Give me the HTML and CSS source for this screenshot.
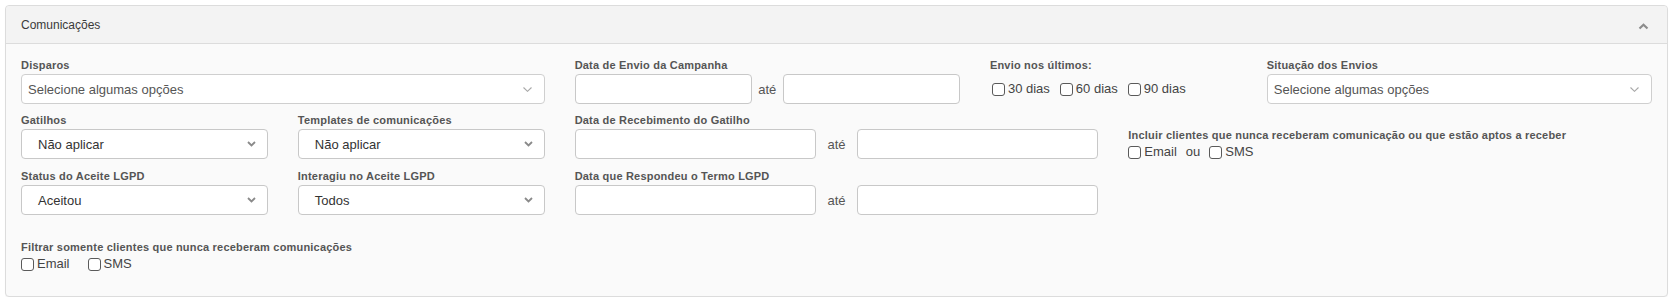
FILE: index.html
```html
<!DOCTYPE html>
<html lang="pt-BR">
<head>
  <meta charset="UTF-8">
  <title>Comunicações</title>
  <link rel="stylesheet" href="styles.css">
</head>
<body>

  <div class="panel">
    <div class="panel-heading">
      <span>Comunicações</span>
      <svg class="collapse-icon" width="11" height="7" viewBox="0 0 11 7">
        <polyline points="1.5,5.5 5.5,1.8 9.5,5.5" fill="none" stroke="#8c8c8c" stroke-width="2.2"/>
      </svg>
    </div>

    <div class="panel-body">
      <!-- linha 1 -->
      <div class="row">
        <div class="field col-4">
          <label>Disparos</label>
          <div class="select multi">
            <span>Selecione algumas opções</span>
            <svg width="9" height="5" viewBox="0 0 9 5"><polyline points="0.5,0.5 4.5,4.3 8.5,0.5" fill="none" stroke="#a8a8a8" stroke-width="1.1"/></svg>
          </div>
        </div>
        <div class="field col-3">
          <label>Data de Envio da Campanha</label>
          <div class="range">
            <input type="text">
            <span>até</span>
            <input type="text">
          </div>
        </div>
        <div class="field col-2">
          <label>Envio nos últimos:</label>
          <div class="checks checks-days">
            <label class="check"><input type="checkbox"> 30 dias</label>
            <label class="check"><input type="checkbox"> 60 dias</label>
            <label class="check"><input type="checkbox"> 90 dias</label>
          </div>
        </div>
        <div class="field col-3">
          <label>Situação dos Envios</label>
          <div class="select multi">
            <span>Selecione algumas opções</span>
            <svg width="9" height="5" viewBox="0 0 9 5"><polyline points="0.5,0.5 4.5,4.3 8.5,0.5" fill="none" stroke="#a8a8a8" stroke-width="1.1"/></svg>
          </div>
        </div>
      </div>

      <!-- linha 2 -->
      <div class="row">
        <div class="field col-2">
          <label>Gatilhos</label>
          <div class="select">
            <span>Não aplicar</span>
            <svg width="9" height="6" viewBox="0 0 9 6"><polyline points="1,1 4.5,4.5 8,1" fill="none" stroke="#8a8a8a" stroke-width="1.8"/></svg>
          </div>
        </div>
        <div class="field col-2">
          <label>Templates de comunicações</label>
          <div class="select">
            <span>Não aplicar</span>
            <svg width="9" height="6" viewBox="0 0 9 6"><polyline points="1,1 4.5,4.5 8,1" fill="none" stroke="#8a8a8a" stroke-width="1.8"/></svg>
          </div>
        </div>
        <div class="field col-4">
          <label>Data de Recebimento do Gatilho</label>
          <div class="range">
            <input type="text">
            <span>até</span>
            <input type="text">
          </div>
        </div>
        <div class="field col-4 field-offset">
          <label>Incluir clientes que nunca receberam comunicação ou que estão aptos a receber</label>
          <div class="checks checks-or">
            <label class="check"><input type="checkbox"> Email</label>
            <span>ou</span>
            <label class="check"><input type="checkbox"> SMS</label>
          </div>
        </div>
      </div>

      <!-- linha 3 -->
      <div class="row">
        <div class="field col-2">
          <label>Status do Aceite LGPD</label>
          <div class="select">
            <span>Aceitou</span>
            <svg width="9" height="6" viewBox="0 0 9 6"><polyline points="1,1 4.5,4.5 8,1" fill="none" stroke="#8a8a8a" stroke-width="1.8"/></svg>
          </div>
        </div>
        <div class="field col-2">
          <label>Interagiu no Aceite LGPD</label>
          <div class="select">
            <span>Todos</span>
            <svg width="9" height="6" viewBox="0 0 9 6"><polyline points="1,1 4.5,4.5 8,1" fill="none" stroke="#8a8a8a" stroke-width="1.8"/></svg>
          </div>
        </div>
        <div class="field col-4">
          <label>Data que Respondeu o Termo LGPD</label>
          <div class="range">
            <input type="text">
            <span>até</span>
            <input type="text">
          </div>
        </div>
      </div>

      <!-- linha 4 -->
      <div class="row row-last">
        <div class="field col-12">
          <label>Filtrar somente clientes que nunca receberam comunicações</label>
          <div class="checks checks-only">
            <label class="check"><input type="checkbox"> Email</label>
            <label class="check"><input type="checkbox"> SMS</label>
          </div>
        </div>
      </div>
    </div>
  </div>

</body>
</html>
```

FILE: styles.css
```css
body {
  margin: 0;
  background: #fff;
  font-family: 'Liberation Sans', Arial, sans-serif;
  color: #444;
}

.panel {
  margin: 5px 4px 0 5px;
  border: 1px solid #dcdcdc;
  border-radius: 4px;
  background: #fafafa;
  box-shadow: 0 1px 1px rgba(0, 0, 0, 0.04);
}

.panel-heading {
  display: flex;
  justify-content: space-between;
  align-items: center;
  height: 37px;
  padding: 0 18px 0 15px;
  background: #f3f3f3;
  border-bottom: 1px solid #dcdcdc;
  border-radius: 4px 4px 0 0;
  font-size: 12px;
  color: #3a3a3a;
}

.collapse-icon {
  margin-top: 4px;
}

.panel-body {
  padding: 14px 15px 24px;
}

.row {
  display: grid;
  grid-template-columns: repeat(12, 1fr);
  column-gap: 30px;
  margin-bottom: 9px;
}

.row-last {
  margin-top: 25px;
  margin-bottom: 0;
}

.col-2 { grid-column: span 2; }
.col-3 { grid-column: span 3; }
.col-4 { grid-column: span 4; }
.col-12 { grid-column: span 12; }

.field > label {
  display: block;
  font-size: 11px;
  line-height: 15px;
  font-weight: bold;
  letter-spacing: 0.2px;
  color: #555;
  margin-bottom: 1px;
  white-space: nowrap;
}

.field-offset {
  padding-top: 15px;
}

.select {
  display: flex;
  justify-content: space-between;
  align-items: center;
  box-sizing: border-box;
  height: 30px;
  padding: 0 11px 0 16px;
  background: #fff;
  border: 1px solid #c8c8c8;
  border-radius: 4px;
  font-size: 13px;
  color: #333;
}

.select.multi {
  padding: 0 12px 0 6px;
  border-color: #cfcfcf;
  color: #555;
}

.range {
  display: grid;
  grid-template-columns: 46% 8% 46%;
  align-items: center;
}

.range span {
  text-align: center;
  font-size: 13px;
  color: #555;
}

.range input {
  box-sizing: border-box;
  width: 100%;
  height: 30px;
  margin: 0;
  border: 1px solid #c8c8c8;
  border-radius: 4px;
  background: #fff;
  font-size: 13px;
}

.checks {
  display: flex;
  align-items: center;
  font-size: 13px;
  line-height: 16px;
  color: #444;
}

.checks-days {
  height: 30px;
  gap: 10px;
  padding-left: 2px;
}

.checks-or {
  gap: 9px;
}

.checks-only {
  gap: 18px;
}

.check {
  display: flex;
  align-items: center;
  gap: 3px;
  white-space: nowrap;
}

.check input {
  appearance: none;
  -webkit-appearance: none;
  width: 13px;
  height: 13px;
  margin: 0;
  border: 1px solid #5a5a5a;
  border-radius: 3px;
  background: #fff;
}
```
